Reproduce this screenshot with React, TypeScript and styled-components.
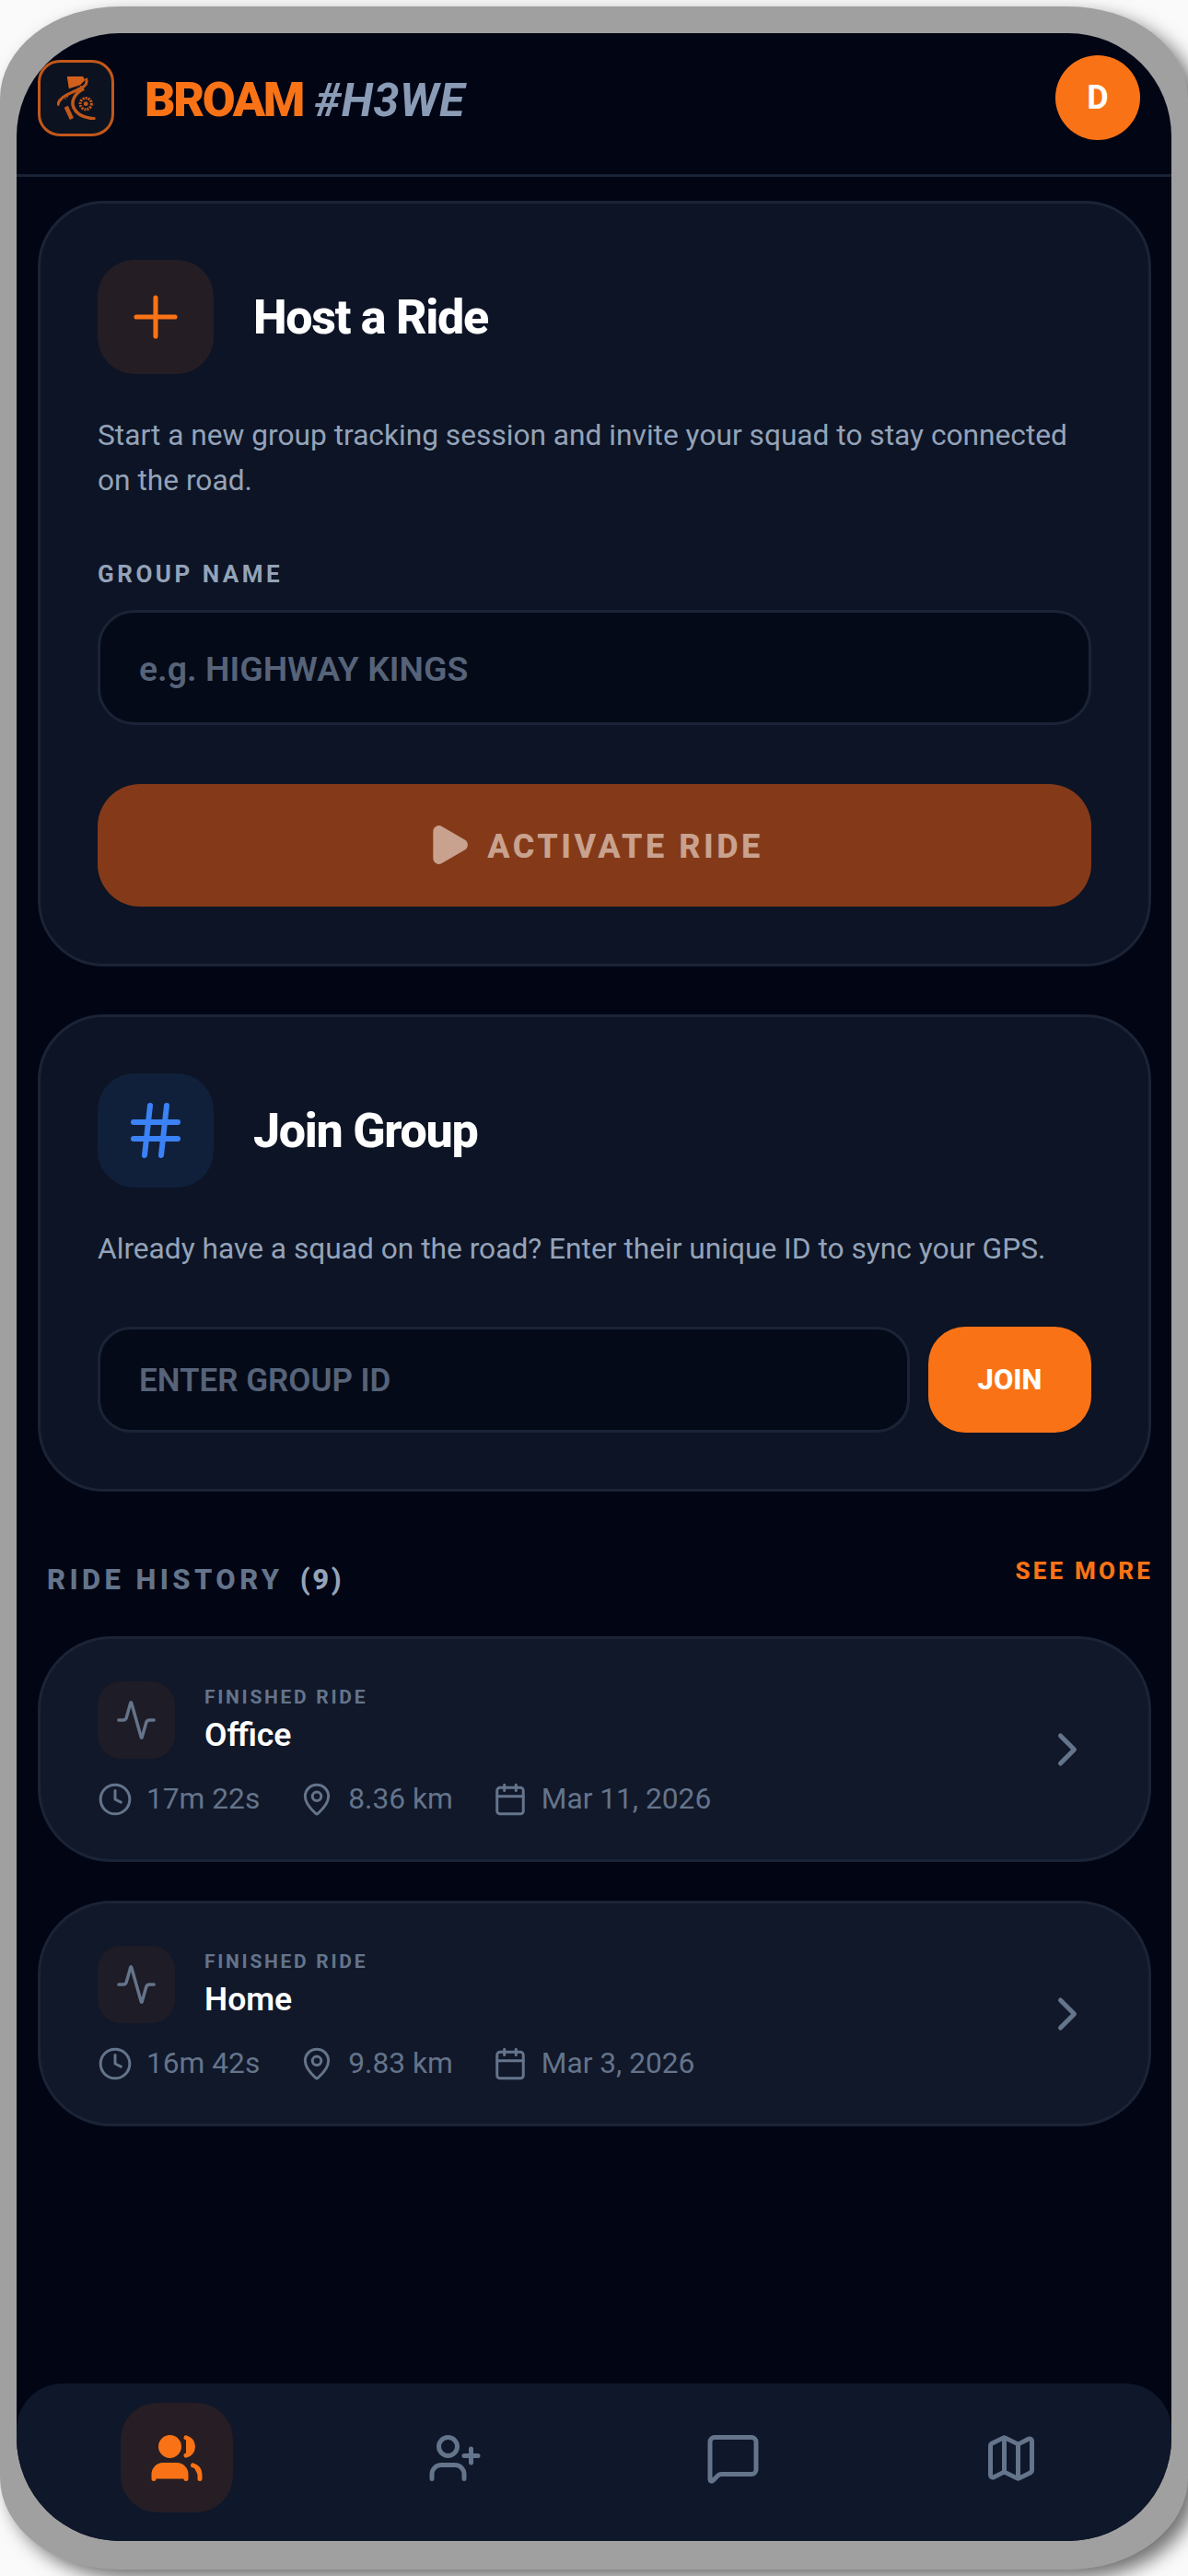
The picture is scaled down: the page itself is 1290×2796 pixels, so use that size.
import React from "react";
import styled, { createGlobalStyle } from "styled-components";
import {
  Activity,
  Calendar,
  ChevronRight,
  Clock,
  Hash,
  Map as MapIcon,
  MapPin,
  MessageSquare,
  Play,
  Plus,
  UserPlus,
  Users,
} from "lucide-react";

const rides = [
  { name: "Office", time: "17m 22s", distance: "8.36 km", date: "Mar 11, 2026" },
  { name: "Home", time: "16m 42s", distance: "9.83 km", date: "Mar 3, 2026" },
];

const GlobalStyle = createGlobalStyle`
  html, body {
    margin: 0;
    padding: 0;
    height: 2796px;
    overflow: hidden;
    background: #fafafa;
    font-family: Roboto, "Liberation Sans", sans-serif;
  }
  * { box-sizing: border-box; }
`;

const LogoMark = () => (
  <svg width="42" height="47" viewBox="0 0 40 46" fill="none">
    <path d="M10 0H27L29 4L24 9L12 13Z" fill="#d0601c" />
    <path d="M30 2C34 10 24 13 15 17C7 20 1 24 0 31" stroke="#c2581a" strokeWidth="3" />
    <path d="M25 10C20 15 12 18 8 24" stroke="#c2581a" strokeWidth="1.6" strokeDasharray="2 1.5" />
    <path d="M9 32L15 45" stroke="#c2581a" strokeWidth="4.5" />
    <path d="M28 13C18 18 14 26 17 33C20 40 28 44 40 45" stroke="#c2581a" strokeWidth="3.4" />
    <circle cx="30" cy="29" r="6" stroke="#c2581a" strokeWidth="3" strokeDasharray="2 1" />
    <circle cx="30" cy="29" r="2.4" fill="#c2581a" />
  </svg>
);

export default function App() {
  return (
    <>
      <GlobalStyle />
      <Frame>
        <Screen>
          <Header>
            <Brand>
              <LogoBox>
                <LogoMark />
              </LogoBox>
              <BrandName>
                BROAM <BrandCode>#H3WE</BrandCode>
              </BrandName>
            </Brand>
            <Avatar>D</Avatar>
          </Header>

          <Main>
            <Card>
              <CardHead>
                <IconBox $tone="orange">
                  <Plus size={72} strokeWidth={1.7} />
                </IconBox>
                <CardTitle>Host a Ride</CardTitle>
              </CardHead>
              <CardText>
                Start a new group tracking session and invite your squad to stay connected on the
                road.
              </CardText>
              <FieldLabel>GROUP NAME</FieldLabel>
              <NameInput placeholder="e.g. HIGHWAY KINGS" readOnly />
              <ActivateButton type="button">
                <Play size={50} fill="currentColor" strokeWidth={2} />
                ACTIVATE RIDE
              </ActivateButton>
            </Card>

            <JoinCard>
              <CardHead>
                <IconBox $tone="blue">
                  <Hash size={72} strokeWidth={2} />
                </IconBox>
                <CardTitle>Join Group</CardTitle>
              </CardHead>
              <CardText>
                Already have a squad on the road? Enter their unique ID to sync your GPS.
              </CardText>
              <JoinRow>
                <GroupInput placeholder="ENTER GROUP ID" readOnly />
                <JoinButton type="button">JOIN</JoinButton>
              </JoinRow>
            </JoinCard>

            <HistoryHead>
              <HistoryTitle>
                RIDE HISTORY <HistoryCount>(9)</HistoryCount>
              </HistoryTitle>
              <SeeMore>SEE MORE</SeeMore>
            </HistoryHead>

            <RideList>
              {rides.map((ride) => (
                <RideCard key={ride.name}>
                  <RideBody>
                    <RideTop>
                      <RideIcon>
                        <Activity size={46} strokeWidth={1.8} />
                      </RideIcon>
                      <div>
                        <RideKicker>FINISHED RIDE</RideKicker>
                        <RideName>{ride.name}</RideName>
                      </div>
                    </RideTop>
                    <RideMeta>
                      <MetaItem>
                        <Clock size={38} strokeWidth={1.9} />
                        {ride.time}
                      </MetaItem>
                      <MetaItem>
                        <MapPin size={38} strokeWidth={1.9} />
                        {ride.distance}
                      </MetaItem>
                      <MetaItem>
                        <Calendar size={38} strokeWidth={1.9} />
                        {ride.date}
                      </MetaItem>
                    </RideMeta>
                  </RideBody>
                  <ChevronRight size={60} strokeWidth={2} color="#64748b" />
                </RideCard>
              ))}
            </RideList>
          </Main>

          <BottomNav>
            <NavItem $active>
              <Users size={60} strokeWidth={2} fill="currentColor" />
            </NavItem>
            <NavItem>
              <UserPlus size={60} strokeWidth={2} />
            </NavItem>
            <NavItem>
              <MessageSquare size={60} strokeWidth={2} />
            </NavItem>
            <NavItem>
              <MapIcon size={60} strokeWidth={2} />
            </NavItem>
          </BottomNav>
        </Screen>
      </Frame>
    </>
  );
}

const Frame = styled.div`
  margin-top: 7px;
  width: 1290px;
  height: 2782px;
  padding: 29px 18px 31px;
  background: #a0a0a0;
  border-radius: 130px / 100px;
  box-shadow: 10px 9px 20px rgba(0, 0, 0, 0.55);
`;

const Screen = styled.div`
  height: 100%;
  display: flex;
  flex-direction: column;
  background: #010514;
  border-radius: 112px;
  overflow: hidden;
`;

const Header = styled.header`
  display: flex;
  align-items: center;
  justify-content: space-between;
  padding: 24px 34px 37px 23px;
  border-bottom: 3px solid #1a2336;
`;

const Brand = styled.div`
  display: flex;
  align-items: center;
  gap: 33px;
`;

const LogoBox = styled.div`
  width: 83px;
  height: 83px;
  display: flex;
  align-items: center;
  justify-content: center;
  background: #0c1220;
  border: 3px solid #c2581a;
  border-radius: 24px;
`;

const BrandName = styled.div`
  font-size: 52px;
  font-weight: 900;
  letter-spacing: -2.4px;
  color: #f97316;
  transform: translateY(2px);
`;

const BrandCode = styled.span`
  margin-left: 2px;
  font-style: italic;
  font-weight: 700;
  letter-spacing: 0.6px;
  font-size: 50px;
  color: #8a9bb5;
`;

const Avatar = styled.div`
  width: 92px;
  height: 92px;
  display: flex;
  align-items: center;
  justify-content: center;
  background: #f97316;
  border-radius: 50%;
  color: #fff;
  font-size: 36px;
  font-weight: 700;
`;

const Main = styled.main`
  flex: 1;
  display: flex;
  flex-direction: column;
  padding: 26px 22px 0 23px;
`;

const Card = styled.section`
  height: 831px;
  padding: 61px 62px 0;
  background: #0d1425;
  border: 3px solid #1b2436;
  border-radius: 72px;
`;

const JoinCard = styled(Card)`
  height: 518px;
  margin-top: 52px;
`;

const CardHead = styled.div`
  display: flex;
  align-items: center;
  gap: 43px;
`;

const IconBox = styled.div<{ $tone: "orange" | "blue" }>`
  width: 126px;
  height: 124px;
  display: flex;
  align-items: center;
  justify-content: center;
  border-radius: 40px;
  background: ${({ $tone }) => ($tone === "orange" ? "#241d24" : "#10203a")};
  color: ${({ $tone }) => ($tone === "orange" ? "#f97316" : "#3b82f6")};
`;

const CardTitle = styled.h2`
  margin: 0;
  font-size: 52px;
  font-weight: 800;
  letter-spacing: -1.3px;
  color: #fff;
`;

const CardText = styled.p`
  margin: 42px 0 0;
  font-size: 31.7px;
  line-height: 49px;
  color: #94a3b8;
`;

const FieldLabel = styled.div`
  margin-top: 63px;
  font-size: 26px;
  line-height: 28px;
  font-weight: 700;
  letter-spacing: 3.5px;
  color: #94a3b8;
`;

const TextField = styled.input`
  display: block;
  padding: 2px 42px 0;
  background: #050a18;
  border: 3px solid #1b2436;
  outline: none;
  font-family: inherit;
  font-weight: 600;
  color: #fff;

  &::placeholder {
    color: #566379;
    opacity: 1;
  }
`;

const NameInput = styled(TextField)`
  width: 100%;
  height: 125px;
  margin-top: 25px;
  font-size: 37.4px;
  border-radius: 40px;
`;

const ActivateButton = styled.button`
  width: 100%;
  height: 133px;
  margin-top: 64px;
  padding-top: 4px;
  display: flex;
  align-items: center;
  justify-content: center;
  gap: 17px;
  background: #843a18;
  border: none;
  border-radius: 46px;
  font-family: inherit;
  font-size: 36px;
  font-weight: 800;
  letter-spacing: 3.5px;
  color: #c9a18f;

  svg {
    margin-top: -4px;
  }
`;

const JoinRow = styled.div`
  display: flex;
  gap: 20px;
  margin-top: 60px;
`;

const GroupInput = styled(TextField)`
  flex: 1;
  min-width: 0;
  height: 115px;
  font-size: 35px;
  border-radius: 36px;
`;

const JoinButton = styled.button`
  width: 177px;
  height: 115px;
  background: #f97316;
  border: none;
  border-radius: 40px;
  font-family: inherit;
  font-size: 31px;
  font-weight: 800;
  color: #fff;
`;

const HistoryHead = styled.div`
  display: flex;
  align-items: flex-start;
  justify-content: space-between;
  margin-top: 70px;
  padding-left: 10px;
`;

const HistoryTitle = styled.h3`
  margin: 0;
  font-size: 31px;
  line-height: 52px;
  font-weight: 800;
  letter-spacing: 4.4px;
  color: #64748b;
`;

const HistoryCount = styled.span`
  margin-left: 6px;
  letter-spacing: 2.6px;
  color: #94a3b8;
`;

const SeeMore = styled.div`
  margin-right: -2px;
  font-size: 26px;
  line-height: 32px;
  font-weight: 800;
  letter-spacing: 3.2px;
  color: #f97316;
`;

const RideList = styled.div`
  display: flex;
  flex-direction: column;
  gap: 42px;
  margin-top: 35px;
`;

const RideCard = styled.article`
  height: 245px;
  display: flex;
  align-items: center;
  justify-content: space-between;
  padding: 0 58px 0 62px;
  background: #111829;
  border: 3px solid #1b2436;
  border-radius: 80px;
`;

const RideBody = styled.div`
  display: flex;
  flex-direction: column;
  gap: 24px;
`;

const RideTop = styled.div`
  display: flex;
  align-items: center;
  gap: 32px;
`;

const RideIcon = styled.div`
  width: 84px;
  height: 84px;
  display: flex;
  align-items: center;
  justify-content: center;
  background: #1e1c26;
  border-radius: 26px;
  color: #64748b;
`;

const RideKicker = styled.div`
  font-size: 21px;
  line-height: 26px;
  font-weight: 700;
  letter-spacing: 2.7px;
  color: #64748b;
`;

const RideName = styled.div`
  margin-top: 6px;
  font-size: 35.5px;
  line-height: 44px;
  font-weight: 600;
  color: #fff;
`;

const RideMeta = styled.div`
  display: flex;
  align-items: center;
  gap: 43px;
`;

const MetaItem = styled.div`
  display: flex;
  align-items: center;
  gap: 15px;
  font-size: 31.7px;
  line-height: 40px;
  color: #64748b;
`;

const BottomNav = styled.nav`
  height: 171px;
  flex-shrink: 0;
  margin-top: auto;
  display: grid;
  grid-template-columns: repeat(4, 1fr);
  align-items: start;
  justify-items: center;
  padding: 21px 23px 0;
  background: #0f172a;
  border-radius: 50px 50px 0 0;
`;

const NavItem = styled.div<{ $active?: boolean }>`
  width: 122px;
  height: 119px;
  display: flex;
  align-items: center;
  justify-content: center;
  border-radius: 40px;
  background: ${({ $active }) => ($active ? "#261e24" : "transparent")};
  color: ${({ $active }) => ($active ? "#f97316" : "#64748b")};
`;
